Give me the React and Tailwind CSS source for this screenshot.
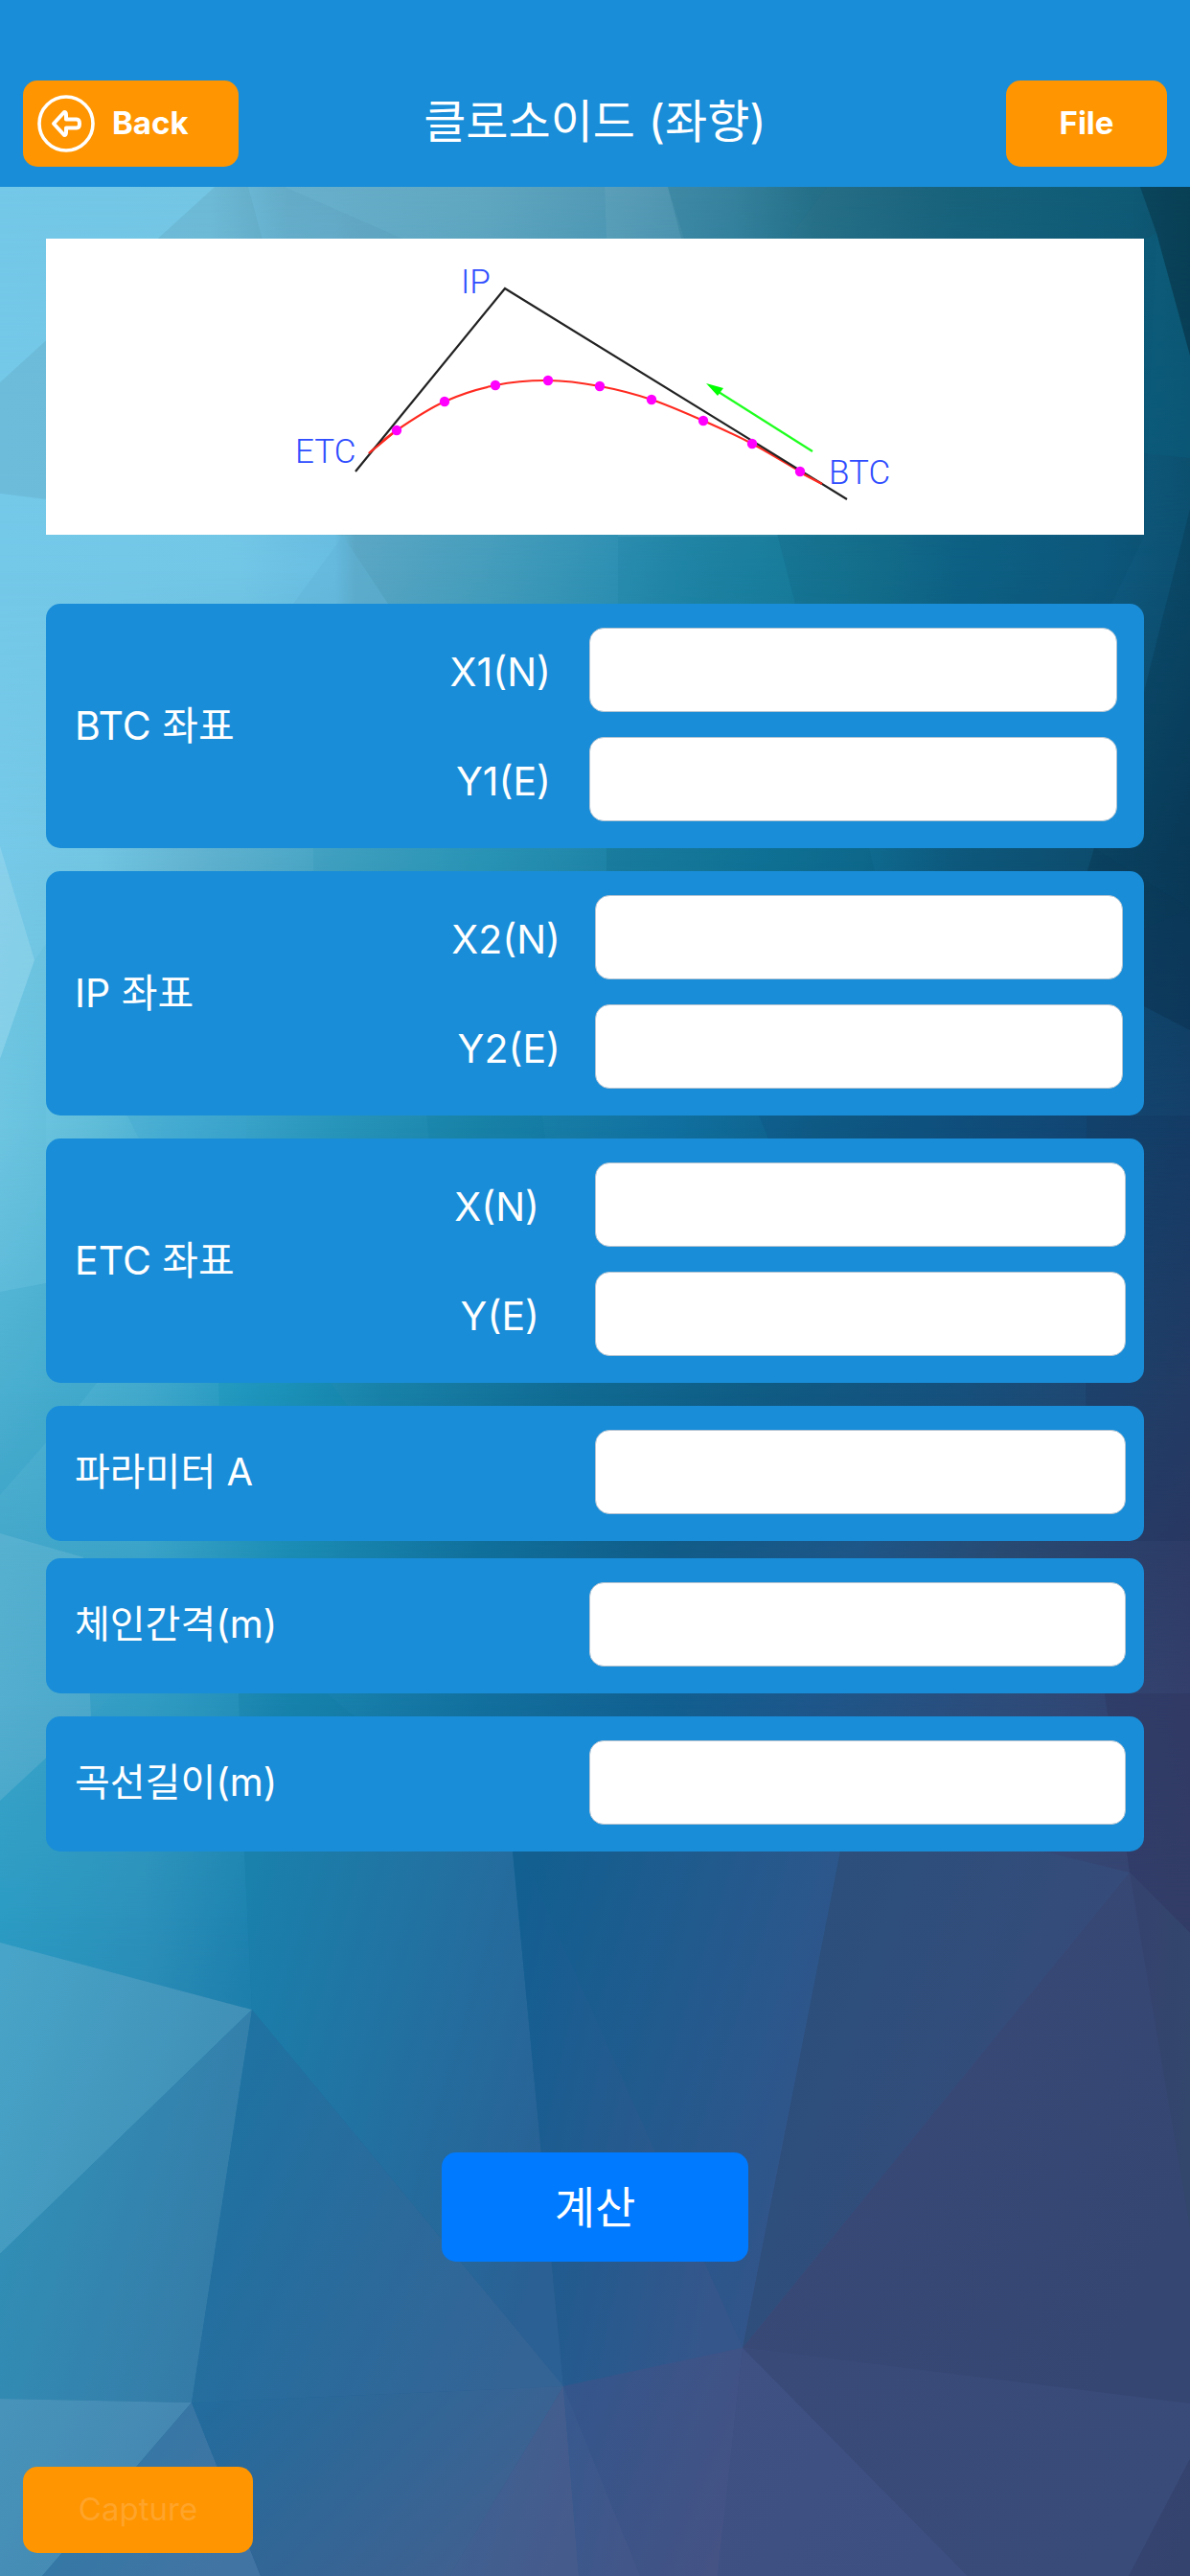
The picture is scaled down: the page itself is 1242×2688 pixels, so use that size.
import React from "react";

const W = 1242;
const H = 2688;

/* Horizontal colour runs of the backdrop; neighbouring runs are blended vertically. */
const ROWS = [
  { y: 195, stops: [[0, "#74c8e8"], [220, "#74c6e4"], [300, "#68b0cc"], [500, "#61a7c1"], [640, "#5299b5"], [760, "#4089a5"], [850, "#2b738b"], [1000, "#1a657f"], [1180, "#105d79"], [1242, "#0e536c"]] },
  { y: 595, stops: [[0, "#74c8e8"], [250, "#72c6e6"], [350, "#68bee2"], [370, "#5aa6c4"], [500, "#469dbc"], [640, "#2e90b3"], [720, "#2185a6"], [830, "#1a7c9b"], [900, "#177592"], [1000, "#10668a"], [1150, "#0f5a80"], [1242, "#0c4f70"]] },
  { y: 897, stops: [[0, "#76c9e8"], [100, "#72c6e2"], [200, "#62b3d0"], [350, "#45a2c2"], [500, "#2c95b7"], [640, "#1d82a5"], [800, "#11759a"], [900, "#0f6b90"], [1000, "#0d587c"], [1130, "#0d4d6e"], [1242, "#0a3e5e"]] },
  { y: 1176, stops: [[0, "#72c8e4"], [100, "#5fbcd8"], [200, "#43a9cf"], [350, "#2794ba"], [500, "#1b84a9"], [700, "#1070a0"], [850, "#0f5f88"], [1000, "#10527e"], [1242, "#15406a"]] },
  { y: 1455, stops: [[0, "#54b5d4"], [150, "#41a8cb"], [260, "#2498c0"], [400, "#1881a8"], [600, "#106a92"], [800, "#0f5b84"], [1000, "#16507c"], [1242, "#26406a"]] },
  { y: 1617, stops: [[0, "#43a7ca"], [150, "#3ba3c8"], [300, "#1b8db5"], [500, "#10709c"], [700, "#115c88"], [900, "#1e5688"], [1050, "#284a72"], [1242, "#2d3b66"]] },
  { y: 1779, stops: [[0, "#41a5ca"], [150, "#339bc2"], [300, "#1a85b0"], [500, "#12709e"], [700, "#115f90"], [850, "#1e568a"], [1050, "#2d4c7a"], [1242, "#353f6b"]] },
  { y: 2000, stops: [[0, "#2c9bc3"], [150, "#2c8eb8"], [263, "#1a7ba9"], [420, "#166b9c"], [600, "#115f92"], [800, "#25558a"], [920, "#2a4f7b"], [1050, "#374979"], [1242, "#36436e"]] },
  { y: 2340, stops: [[0, "#2387b2"], [180, "#1c719f"], [330, "#176397"], [470, "#195e92"], [600, "#285888"], [720, "#32538a"], [840, "#374b79"], [1000, "#374878"], [1242, "#364775"]] },
  { y: 2688, stops: [[0, "#2b7ba6"], [150, "#256b9b"], [300, "#245f94"], [450, "#2f5b92"], [600, "#3a568a"], [700, "#435285"], [850, "#3c4e80"], [1000, "#394a79"], [1242, "#344370"]] },
];

/* Translucent facets of the upper part: points, colour, opacity. */
const TINTS = [
  ["224,195 259,195 358,559 0,515 0,399", "#000", 0.06],
  ["259,195 297,195 420,249 440,559 358,559", "#306a90", 0.06],
  ["631,195 697,195 812,560 645,560", "#fff", 0.05],
  ["697,195 863,195 740,360", "#0a5a78", 0.14],
  ["863,195 1190,195 1207,243 1194,559 812,560 740,360", "#003040", 0.06],
  ["1190,195 1242,195 1242,371 1207,243", "#001c2c", 0.35],
  ["1207,243 1242,371 1242,478 1194,473 1194,250", "#0a6280", 0.35],
  ["1242,531 1194,722 1142,885 1242,948", "#042238", 0.2],
  ["1142,885 1135,909 1194,969 1242,948", "#042238", 0.25],
  ["1194,969 1242,948 1242,1075 1194,1050", "#0a2d4a", 0.4],
  ["358,559 405,630 306,630", "#62b4d6", 0.45],
  ["645,560 812,560 830,630 645,630", "#0f7a9c", 0.15],
  ["812,560 830,630 907,885 1000,885 1160,630 1194,560", "#004860", 0.14],
  ["327,885 569,885 583,909 327,909", "#1b8db0", 0.15],
  ["633,885 907,885 913,909 633,909", "#005068", 0.12],
  ["0,883 36,1002 0,1105", "#fff", 0.14],
  ["0,1105 36,1002 48,985 48,1339 0,1348", "#5cb8d8", 0.2],
  ["133,1164 257,1164 257,1188 145,1188", "#3aa6d0", 0.3],
  ["0,1348 48,1339 101,1443 82,1467 0,1560", "#1a90b8", 0.16],
  ["228,1443 345,1443 363,1467 404,1608 239,1608 229,1467", "#0088b0", 0.16],
  ["445,1164 566,1164 600,1443 479,1443", "#007090", 0.1],
  ["792,1164 1134,1164 1133,1443 907,1443", "#103870", 0.14],
  ["1134,1164 1242,1164 1242,1608 1133,1608", "#102848", 0.16],
  ["0,1600 87,1625 95,1791 0,1879", "#fff", 0.1],
  ["120,1767 249,1767 255,1932 263,2097 0,2027 0,1879", "#2fa0c8", 0.2],
  ["249,1767 341,1767 370,1791 535,1932 255,1932", "#007098", 0.12],
  ["1153,1767 1242,1767 1242,2017 1179,1954", "#2c3258", 0.35],
];

/* Opaque facets of the lower part: points, start colour, end colour. */
const FACETS = [
  ["255,1932 535,1932 588,2490 263,2097", "#1a80ac", "#2a6094"],
  ["535,1932 544,1932 775,2450 588,2490", "#125f92", "#35568b"],
  ["544,1932 877,1932 775,2450", "#125f90", "#34548a"],
  ["877,1932 1089,1932 1179,1954 775,2450", "#29507c", "#394a79"],
  ["775,2450 1179,1954 1242,2327 1242,2508", "#394a78", "#364673"],
  ["1179,1954 1242,2017 1242,2327", "#34426e", "#33466c"],
  ["0,2027 263,2097 0,2352", "#48a4c8", "#3f8cb4"],
  ["263,2097 200,2507 0,2503 0,2352", "#3093b9", "#357aa7"],
  ["0,2503 200,2507 44,2688 0,2688", "#4793ba", "#4485b0"],
  ["200,2507 272,2688 44,2688", "#2d79a7", "#4274a3"],
  ["263,2097 588,2490 200,2507", "#1c74a3", "#346496"],
  ["200,2507 588,2490 469,2688 272,2688", "#226c9d", "#41608f"],
  ["588,2490 604,2688 469,2688", "#3c6394", "#455b8c"],
  ["588,2490 668,2688 604,2688", "#37598e", "#435689"],
  ["588,2490 775,2450 749,2688 668,2688", "#33568c", "#445284"],
  ["775,2450 1010,2688 749,2688", "#3f5083", "#3d4e80"],
  ["775,2450 1242,2508 1242,2566 1178,2688 1010,2688", "#394a78", "#394b79"],
  ["1242,2566 1242,2688 1178,2688", "#354470", "#34426e"],
];

function Backdrop() {
  return (
    <svg
      className="absolute inset-0 h-full w-full"
      viewBox={`0 0 ${W} ${H}`}
      preserveAspectRatio="none"
      aria-hidden="true"
    >
      <defs>
        {ROWS.map((row, i) => (
          <linearGradient key={i} id={`row${i}`} gradientUnits="userSpaceOnUse" x1="0" y1={row.y} x2={W} y2={row.y}>
            {row.stops.map(([x, color]) => (
              <stop key={x} offset={x / W} stopColor={color} />
            ))}
          </linearGradient>
        ))}
        {FACETS.map(([points, from, to], i) => (
          <linearGradient key={points} id={`facet${i}`} x1="0" y1="0.1" x2="1" y2="0.6">
            <stop offset="0" stopColor={from} />
            <stop offset="1" stopColor={to} />
          </linearGradient>
        ))}
        <linearGradient id="fade" x1="0" y1="0" x2="0" y2="1">
          <stop offset="0" stopColor="#fff" stopOpacity="0" />
          <stop offset="1" stopColor="#fff" />
        </linearGradient>
        <mask id="blend" maskContentUnits="objectBoundingBox" x="0" y="0" width="1" height="1" style={{ maskType: "alpha" }}>
          <rect width="1" height="1" fill="url(#fade)" />
        </mask>
      </defs>
      {ROWS.slice(0, -1).map((row, i) => {
        const height = ROWS[i + 1].y - row.y;
        return (
          <g key={i}>
            <rect y={row.y} width={W} height={height} fill={`url(#row${i})`} />
            <rect y={row.y} width={W} height={height} fill={`url(#row${i + 1})`} mask="url(#blend)" />
          </g>
        );
      })}
      {TINTS.map(([points, color, opacity]) => (
        <polygon key={points} points={points} fill={color} fillOpacity={opacity} />
      ))}
      {FACETS.map(([points], i) => (
        <polygon key={points} points={points} fill={`url(#facet${i})`} />
      ))}
    </svg>
  );
}

const STATIONS = [
  [414, 449], [464, 419], [517, 402], [572, 397], [626, 403],
  [680, 417], [734, 439], [785, 463], [835, 492],
];

/* Catmull-Rom spline through the given points. */
function smoothPath(pts) {
  let d = `M${pts[0][0]} ${pts[0][1]}`;
  for (let i = 0; i < pts.length - 1; i++) {
    const p0 = pts[i - 1] || pts[i];
    const p1 = pts[i];
    const p2 = pts[i + 1];
    const p3 = pts[i + 2] || p2;
    d += ` C${p1[0] + (p2[0] - p0[0]) / 6} ${p1[1] + (p2[1] - p0[1]) / 6} ${p2[0] - (p3[0] - p1[0]) / 6} ${p2[1] - (p3[1] - p1[1]) / 6} ${p2[0]} ${p2[1]}`;
  }
  return d;
}

const CURVE = smoothPath([[385, 473], ...STATIONS, [858, 505]]);

function CurveDiagram() {
  return (
    <svg viewBox="48 249 1146 309" className="block w-full bg-white" role="img" aria-label="BTC, IP, ETC">
      <path d={CURVE} fill="none" stroke="#ff2a20" strokeWidth="2.2" />
      <path d="M371 492 L527 301 L884 521" fill="none" stroke="#222" strokeWidth="2.2" />
      <path d="M385 473 L414 449 M835 493 L858 505" fill="none" stroke="#ff2a20" strokeWidth="2.2" />
      {STATIONS.map(([x, y]) => (
        <circle key={x} cx={x} cy={y} r="5.2" fill="#ff00ff" />
      ))}
      <path d="M848 471 L750 409" stroke="#1eff1e" strokeWidth="2.2" />
      <path d="M737 400 L755 405 L749 413 Z" fill="#00ff00" />
      <g fill="#2f4dff" className="font-['Roboto',sans-serif] text-[35px] font-light">
        <text x="481" y="306">IP</text>
        <text x="308" y="483">ETC</text>
        <text x="865" y="505">BTC</text>
      </g>
    </svg>
  );
}

const FIELD = "h-[88px] w-full min-w-0 rounded-[15px] border border-[#b4c4d2] bg-white px-5 text-[41px] text-black outline-none";
const CARD = "rounded-[15px] bg-[#198dd8] pt-[25px] pb-7 leading-[50px] text-white";

function CoordinateCard({ title, labels, cols, labelGap }) {
  const id = labels[0];
  return (
    <section role="group" aria-labelledby={`title-${id}`} className={`${CARD} grid items-center gap-y-[26px] text-[41px] ${cols}`}>
      <h2 id={`title-${id}`} className="row-span-2 pt-0.5 pl-[30px] whitespace-nowrap">{title}</h2>
      {labels.map((label) => (
        <React.Fragment key={label}>
          <label htmlFor={label} className={`justify-self-end pt-1 ${labelGap}`}>{label}</label>
          <input id={label} type="text" inputMode="decimal" className={FIELD} />
        </React.Fragment>
      ))}
    </section>
  );
}

function ValueCard({ id, label, cols }) {
  return (
    <div className={`${CARD} grid items-center pr-[19px] text-[40px] ${cols}`}>
      <label htmlFor={id} className="pl-[30px]">{label}</label>
      <input id={id} type="text" inputMode="decimal" className={FIELD} />
    </div>
  );
}

function BackIcon() {
  return (
    <svg viewBox="0 0 60 60" className="h-[60px] w-[60px]" fill="none" stroke="#fff" strokeLinejoin="round" aria-hidden="true">
      <circle cx="30" cy="30" r="28" strokeWidth="3.6" />
      <path d="M28 18 L17 30 L28 42 Q30 42 30 39 V34.500 H41 Q44 34.500 44 30 Q44 25.500 41 25.500 H30 V21 Q30 18 28 18 Z" strokeWidth="4" />
    </svg>
  );
}

export default function App() {
  return (
    <div className="relative isolate flex min-h-screen flex-col bg-[#198dd8] font-['Inter','Noto_Sans_CJK_KR',sans-serif]">
      <div className="absolute inset-0 -z-10">
        <Backdrop />
      </div>
      <header className="grid grid-cols-[1fr_auto_1fr] items-center bg-[#198dd8] px-6 pt-[84px] pb-[21px] text-white">
        <button type="button" className="flex h-[90px] w-[225px] items-center gap-[18px] justify-self-start rounded-[15px] bg-[#ff9500] pl-[15px] text-[33px] font-bold">
          <BackIcon />
          Back
        </button>
        <h1 className="pb-1 text-[48px] leading-[60px] font-normal">클로소이드 (좌향)</h1>
        <button type="button" className="h-[90px] w-[168px] justify-self-end rounded-[15px] bg-[#ff9500] text-[33px] font-bold">
          File
        </button>
      </header>

      <main className="flex flex-1 flex-col px-12 pt-[54px]">
        <CurveDiagram />
        <form className="mt-[72px] flex flex-col" onSubmit={(e) => e.preventDefault()}>
          <div className="flex flex-col gap-6">
            <CoordinateCard
              title="BTC 좌표"
              labels={["X1(N)", "Y1(E)"]}
              cols="grid-cols-[220fr_347fr_551fr] pr-7"
              labelGap="pr-10"
            />
            <CoordinateCard
              title="IP 좌표"
              labels={["X2(N)", "Y2(E)"]}
              cols="grid-cols-[220fr_353fr_551fr] pr-[22px]"
              labelGap="pr-9"
            />
            <CoordinateCard
              title="ETC 좌표"
              labels={["X(N)", "Y(E)"]}
              cols="grid-cols-[220fr_353fr_554fr] pr-[19px]"
              labelGap="pr-[58px]"
            />
            <ValueCard id="parameter" label="파라미터 A" cols="grid-cols-[573fr_554fr]" />
          </div>
          <div className="mt-[18px] flex flex-col gap-6">
            <ValueCard id="interval" label="체인간격(m)" cols="grid-cols-[567fr_560fr]" />
            <ValueCard id="length" label="곡선길이(m)" cols="grid-cols-[567fr_560fr]" />
          </div>
          <button type="submit" className="mt-[314px] h-[114px] w-80 self-center rounded-[15px] bg-[#007aff] text-[46px] text-white">
            계산
          </button>
        </form>
      </main>

      <footer className="p-6">
        <button type="button" disabled className="block h-[90px] w-60 rounded-[15px] bg-[#ff9500] text-[33px] text-[#ffa42a]">
          Capture
        </button>
      </footer>
    </div>
  );
}
